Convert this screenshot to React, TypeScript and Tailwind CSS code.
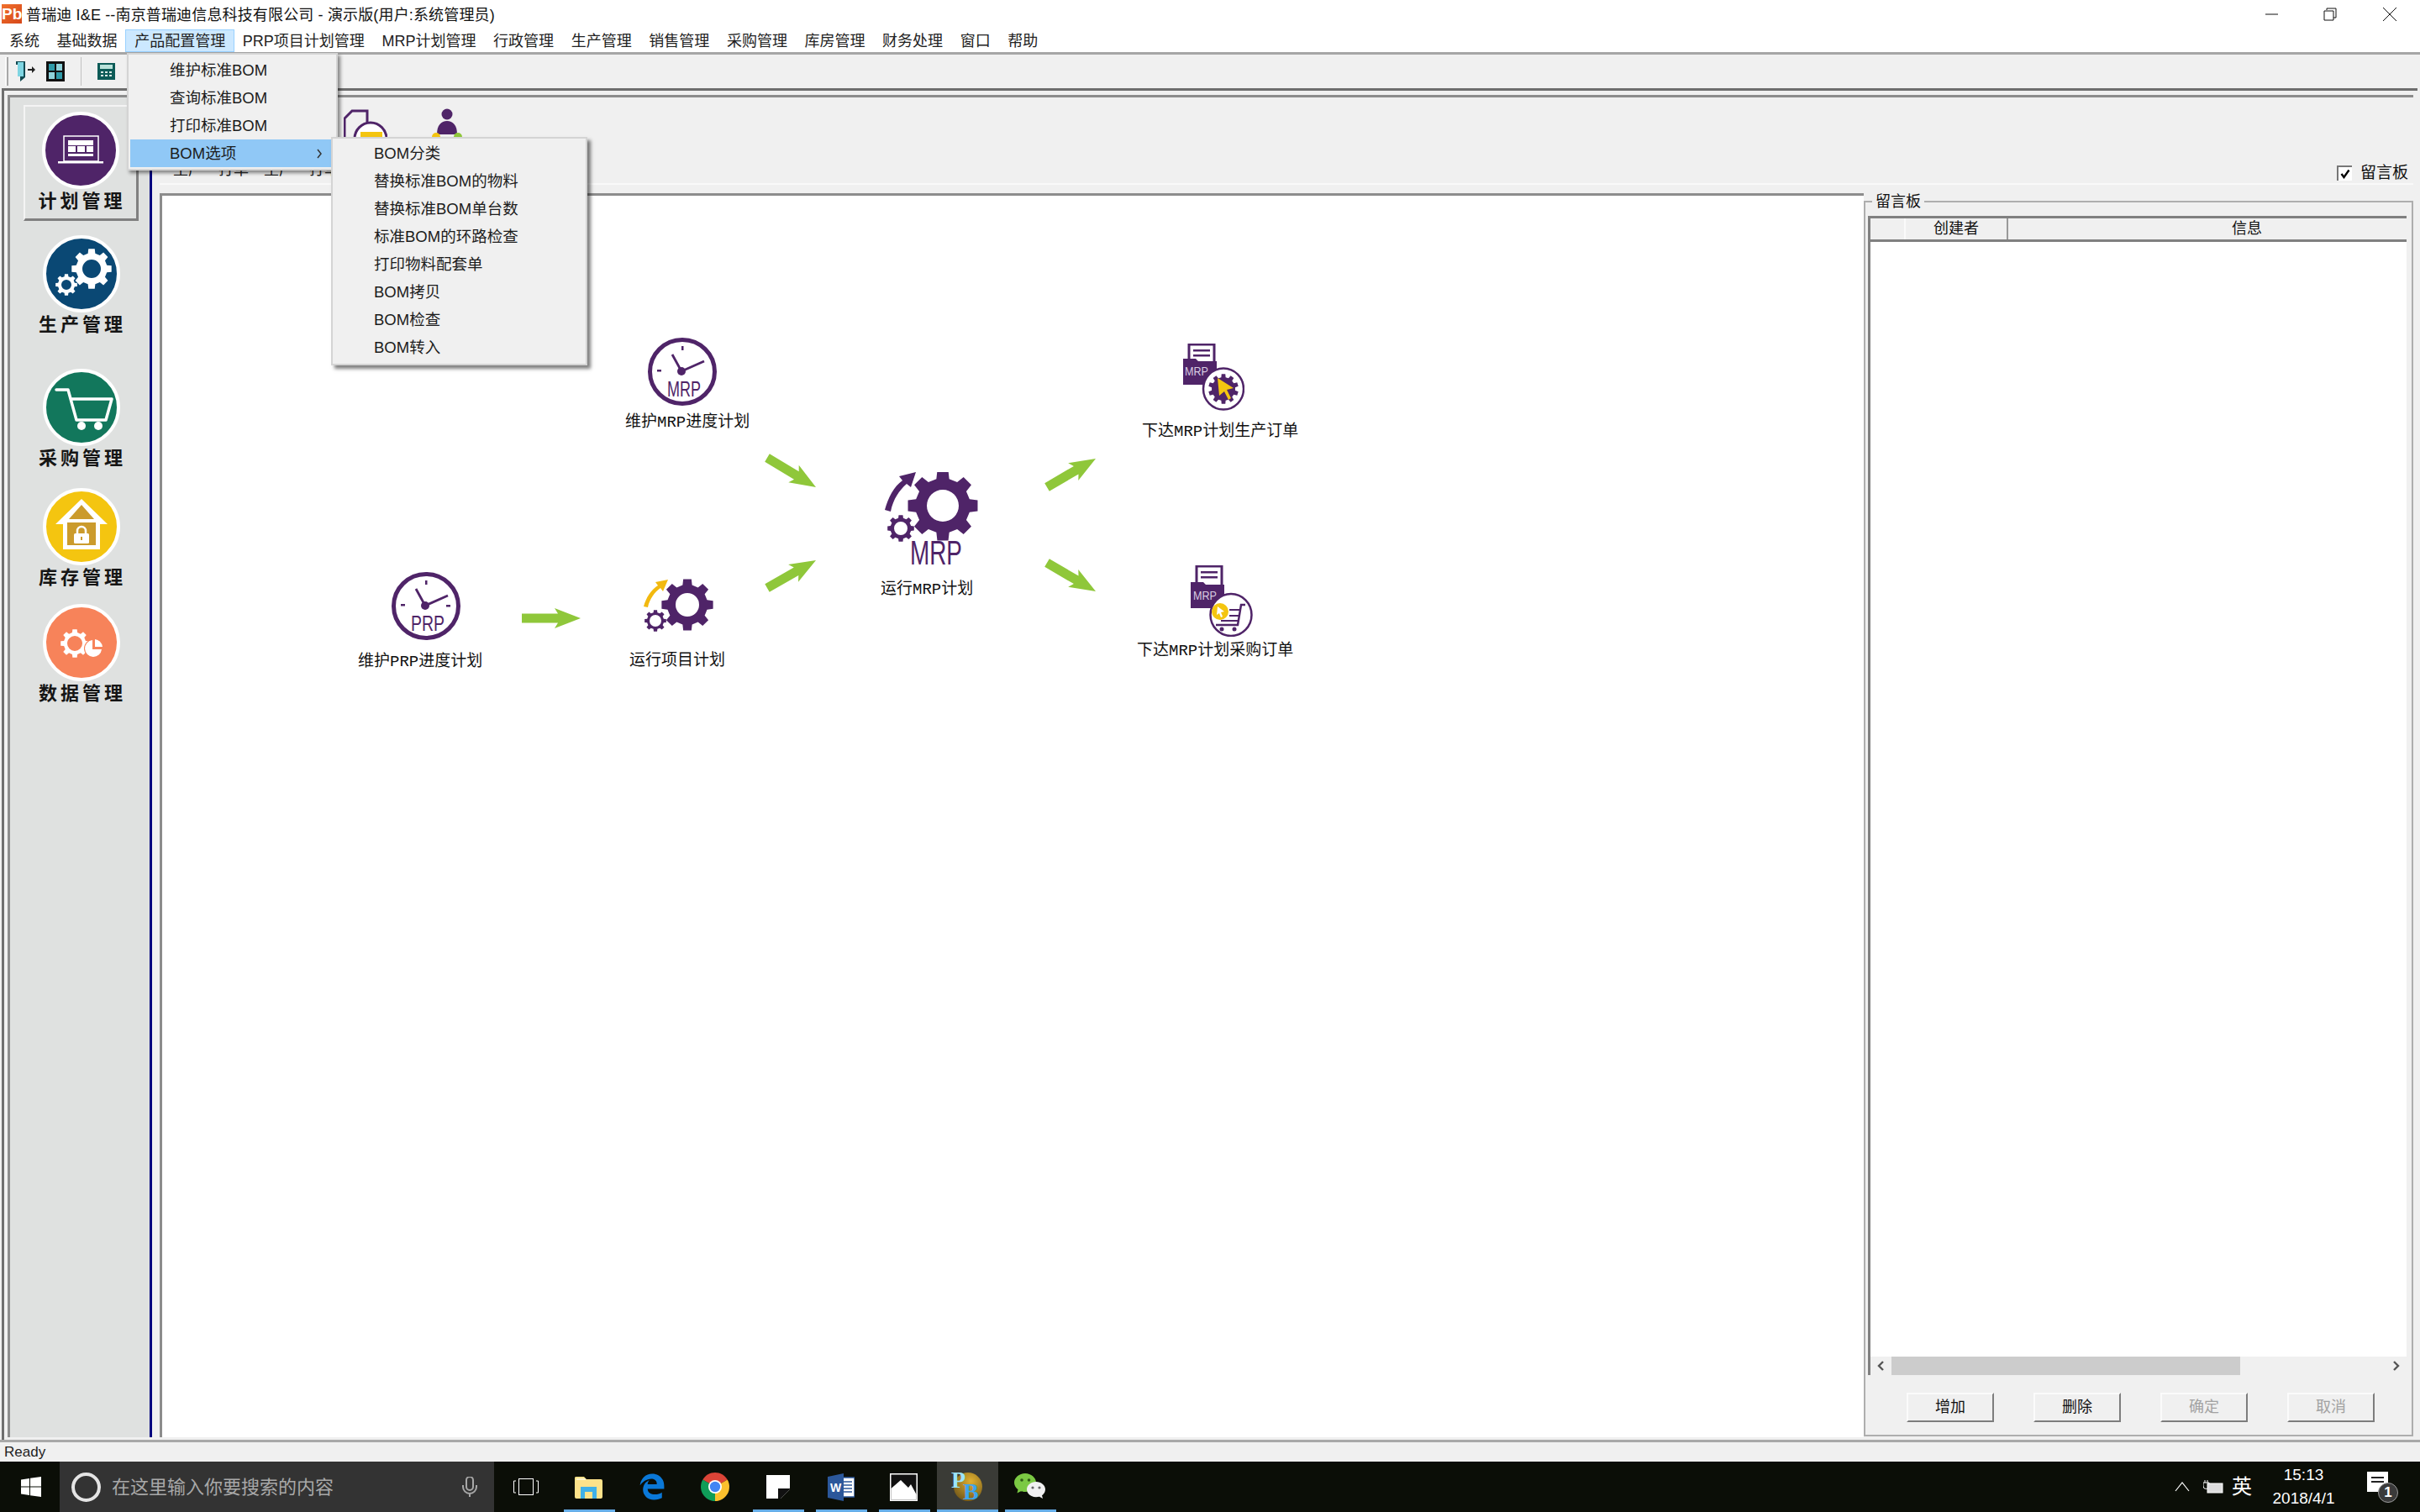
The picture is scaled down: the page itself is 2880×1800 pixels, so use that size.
import React from 'react';
import { FaEdgeLegacy } from 'react-icons/fa6';

const PURPLE = '#4f2468';
const YAHEI = 'font-["Liberation_Sans","Noto_Sans_CJK_SC",sans-serif]';

// toothed outline plus a round hole, fill with evenodd
function gearPath(cx: number, cy: number, R: number, hole: number, n = 8) {
  const root = R * 0.78;
  const step = (Math.PI * 2) / n;
  const pts: string[] = [];
  for (let i = 0; i < n; i++) {
    const a = i * step - Math.PI / 2;
    const w = step * 0.2;
    [[root, a - w * 1.5], [R, a - w], [R, a + w], [root, a + w * 1.5]].forEach(([rad, ang]) => {
      pts.push(`${(cx + rad * Math.cos(ang)).toFixed(2)} ${(cy + rad * Math.sin(ang)).toFixed(2)}`);
    });
  }
  return `M${pts.join('L')}Z M${cx - hole} ${cy}a${hole} ${hole} 0 1 0 ${hole * 2} 0a${hole} ${hole} 0 1 0 ${-hole * 2} 0Z`;
}

function CircleIcon({ color, children }: { color: string; children: React.ReactNode }) {
  return (
    <svg width="92" height="92" viewBox="-46 -46 92 92" className="shrink-0">
      <circle r="44" fill={color} stroke="#fff" strokeWidth="4" />
      {children}
    </svg>
  );
}

const sideItems = [
  {
    label: '计划管理', color: '#4f2468', cls: 'mt-[9px] pt-[6px] h-[138px] border-t-2 border-l-2 border-t-[#f4f4f4] border-l-[#f4f4f4] border-b-[3px] border-r-[3px] border-b-[#808080] border-r-[#808080]',
    icon: (
      <g>
        <rect x="-20" y="-17" width="41" height="30" fill="none" stroke="#fff" strokeWidth="1.5" />
        <rect x="-15" y="-12" width="30" height="6" fill="#fff" />
        <rect x="-15" y="-5" width="9" height="7" fill="#fff" />
        <rect x="-4" y="-5" width="9" height="7" fill="#fff" />
        <rect x="7" y="-5" width="8" height="7" fill="#fff" />
        <rect x="-15" y="4" width="30" height="3" fill="#fff" />
        <rect x="-27" y="13" width="54" height="2.5" fill="#fff" />
      </g>
    ),
  },
  {
    label: '生产管理', color: '#0a4874', cls: 'mt-[17px]',
    icon: (
      <g fill="#fff" fillRule="evenodd">
        <path d={gearPath(12, -6, 24, 11)} />
        <path d={gearPath(-18, 13, 13, 6)} />
      </g>
    ),
  },
  {
    label: '采购管理', color: '#12775c', cls: 'mt-[37px]',
    icon: (
      <g>
        <path d="M-30 -21H-16L-6 15H29L36 -10H-12" fill="none" stroke="#fff" strokeWidth="3.5" strokeLinejoin="round" strokeLinecap="round" />
        <circle cx="0" cy="22" r="5" fill="#fff" />
        <circle cx="20" cy="22" r="5" fill="#fff" />
      </g>
    ),
  },
  {
    label: '库存管理', color: '#f4c510', cls: 'mt-[20px]',
    icon: (
      <g>
        <path d="M0 -33L31 -3H22V27H-22V-3H-31Z" fill="#fff" />
        <path d="M0 -26L-15 -9H15Z" fill="#cb9b2c" />
        <rect x="-17" y="-5" width="34" height="27" fill="#cb9b2c" />
        <path d="M-5 9V5a5 5 0 0 1 10 0V9" fill="none" stroke="#fff" strokeWidth="2.5" />
        <rect x="-9" y="8" width="18" height="12" rx="1.5" fill="#fff" />
        <rect x="-1" y="12" width="2" height="4" fill="#cb9b2c" />
      </g>
    ),
  },
  {
    label: '数据管理', color: '#f7835a', cls: 'mt-[16px]',
    icon: (
      <g fill="#fff" fillRule="evenodd">
        <path d={gearPath(-8, 1, 17, 9)} />
        <circle cx="14" cy="7" r="11" fill="#f7835a" />
        <path d="M13 -3A10 10 0 1 0 24 8H13Z" />
        <path d="M16 -4A10 10 0 0 1 25 5H16Z" />
      </g>
    ),
  },
];

function Sidebar() {
  return (
    <div className="w-[169px] shrink-0 bg-[#dfe1e0] border-r-[3px] border-[#00007f] pl-[16px] flex flex-col">
      {sideItems.map(it => (
        <div key={it.label} className={`w-[137px] flex flex-col items-center ${it.cls}`}>
          <CircleIcon color={it.color}>{it.icon}</CircleIcon>
          <div className={`ml-[3px] h-[30px] leading-[30px] text-[22px] font-bold tracking-[4px] text-[#151515] whitespace-nowrap ${YAHEI}`}>{it.label}</div>
        </div>
      ))}
    </div>
  );
}

function ClockIcon({ text, rightTick }: { text: string; rightTick?: boolean }) {
  return (
    <svg width="82" height="81" viewBox="0 0 82 81" className="block">
      <ellipse cx="41" cy="40.5" rx="38.5" ry="38" fill="#fff" stroke={PURPLE} strokeWidth="5" />
      <rect x="40" y="10" width="2.5" height="5" fill={PURPLE} />
      <rect x="11" y="38" width="5" height="2.5" fill={PURPLE} />
      {rightTick && <rect x="65" y="39" width="5" height="2.5" fill={PURPLE} />}
      <path d="M29 20L40 40L67 28" fill="none" stroke={PURPLE} strokeWidth="2.8" strokeLinejoin="round" />
      <circle cx="40" cy="40" r="5" fill={PURPLE} />
      <text x="43" y="70" textAnchor="middle" fontSize="25" textLength="40" lengthAdjust="spacingAndGlyphs" fill={PURPLE} fontFamily="Liberation Sans, sans-serif">{text}</text>
    </svg>
  );
}

function RunGearIcon() {
  return (
    <svg width="85" height="63" viewBox="0 0 85 63" className="block">
      <g fill={PURPLE} fillRule="evenodd">
        <path d={gearPath(53, 31, 31, 14)} />
        <path d={gearPath(15, 50, 13, 7)} />
      </g>
      <path d="M1 33C4 22 10 13 18 8L15 4L30 1L24 15L21 11C14 16 8 24 6 34Z" fill="#f2b90f" />
    </svg>
  );
}

function MrpGearIcon() {
  return (
    <svg width="112" height="122" viewBox="0 0 112 122" className="block">
      <g fill={PURPLE} fillRule="evenodd">
        <path d={gearPath(70, 40, 42, 19)} />
        <path d={gearPath(20, 67, 16, 8)} />
      </g>
      <path d="M1 45C5 30 12 17 22 10L18 5L38 0L32 18L27 14C18 22 11 32 8 47Z" fill={PURPLE} />
      <text transform="translate(31 110) scale(0.68 1)" fontSize="41" fill={PURPLE} fontFamily="Liberation Sans, sans-serif">MRP</text>
    </svg>
  );
}

function DocFolder() {
  return (
    <g>
      <rect x="7" y="1" width="30" height="28" fill="#fff" stroke={PURPLE} strokeWidth="3" />
      <rect x="12" y="7" width="20" height="2.5" fill={PURPLE} />
      <rect x="12" y="13" width="20" height="2.5" fill={PURPLE} />
      <path d="M0 18H15L18 21H40V49H0Z" fill={PURPLE} />
      <text x="2" y="38" fontSize="15" textLength="28" lengthAdjust="spacingAndGlyphs" fill="#d8cbe0" fontFamily="Liberation Sans, sans-serif">MRP</text>
    </g>
  );
}

function OrderMakeIcon() {
  return (
    <svg width="73" height="80" viewBox="0 0 73 80" className="block">
      <DocFolder />
      <ellipse cx="48" cy="54" rx="24" ry="24.5" fill="#fff" stroke={PURPLE} strokeWidth="2.5" />
      <path d={gearPath(48, 54, 18, 1, 10)} fill={PURPLE} />
      <path d="M41 41L60 53L52 55L57 65L54 67L49 57L43 62Z" fill="#f4c510" />
    </svg>
  );
}

function OrderBuyIcon() {
  return (
    <svg width="74" height="85" viewBox="0 0 74 85" className="block">
      <g>
        <rect x="7" y="1" width="30" height="28" fill="#fff" stroke={PURPLE} strokeWidth="3" />
        <rect x="12" y="7" width="20" height="2.5" fill={PURPLE} />
        <rect x="12" y="13" width="20" height="2.5" fill={PURPLE} />
        <path d="M0 20H15L18 23H40V51H0Z" fill={PURPLE} />
        <text x="3" y="41" fontSize="15" textLength="28" lengthAdjust="spacingAndGlyphs" fill="#d8cbe0" fontFamily="Liberation Sans, sans-serif">MRP</text>
      </g>
      <ellipse cx="48" cy="59" rx="24.5" ry="25" fill="#fff" stroke={PURPLE} strokeWidth="2.5" />
      <path d="M30 71H56L60 47H65" fill="none" stroke={PURPLE} strokeWidth="2.5" />
      <path d="M46 53H59M46 60H58M36 66H56" stroke={PURPLE} strokeWidth="1.8" />
      <circle cx="37" cy="76" r="2.5" fill={PURPLE} />
      <circle cx="52" cy="76" r="2.5" fill={PURPLE} />
      <circle cx="35" cy="55" r="10" fill="#f4c510" />
      <path d="M32 49L40 55L36 56L38 61L36 62L34 57L31 59Z" fill="#fff" />
    </svg>
  );
}

// tail and tip in canvas coordinates
function arrowPoints(x1: number, y1: number, x2: number, y2: number) {
  const len = Math.hypot(x2 - x1, y2 - y1);
  const ux = (x2 - x1) / len;
  const uy = (y2 - y1) / len;
  const nx = -uy;
  const ny = ux;
  const bx = x2 - ux * 31;
  const by = y2 - uy * 31;
  const p = (x: number, y: number, o: number) => `${(x + nx * o).toFixed(1)},${(y + ny * o).toFixed(1)}`;
  return [p(x1, y1, 5.5), p(bx + ux * 4, by + uy * 4, 5.5), p(bx, by, 12), p(x2, y2, 0), p(bx, by, -12), p(bx + ux * 4, by + uy * 4, -5.5), p(x1, y1, -5.5)].join(' ');
}

const arrows = [
  [428, 503, 498, 503],
  [720, 312, 778, 347],
  [720, 467, 778, 434],
  [1053, 347, 1111, 313],
  [1053, 437, 1111, 471],
];

const nodeLabel = 'text-[19px] leading-[26px] whitespace-nowrap text-[#111] font-["Liberation_Mono","Noto_Sans_CJK_SC",monospace]';

function Canvas() {
  return (
    <div className="relative flex-1 min-w-0 bg-white border-t-[3px] border-l-[3px] border-[#8c8c8c] overflow-hidden">
      <svg className="absolute inset-0" width="2030" height="1480">
        {arrows.map((a, i) => (
          <polygon key={i} points={arrowPoints(a[0], a[1], a[2], a[3])} fill="#8fc73a" />
        ))}
      </svg>
      <div className="absolute left-[233px] top-[448px]">
        <div className="ml-[40px]"><ClockIcon text="PRP" rightTick /></div>
        <div className={`mt-[13px] ${nodeLabel}`}>维护PRP进度计划</div>
      </div>
      <div className="absolute left-[551px] top-[169px]">
        <div className="ml-[27px]"><ClockIcon text="MRP" /></div>
        <div className={`mt-[7px] ${nodeLabel}`}>维护MRP进度计划</div>
      </div>
      <div className="absolute left-[556px] top-[456px]">
        <div className="ml-[16px]"><RunGearIcon /></div>
        <div className={`mt-[22px] ${nodeLabel}`}>运行项目计划</div>
      </div>
      <div className="absolute left-[855px] top-[329px]">
        <div className="ml-[4px]"><MrpGearIcon /></div>
        <div className={`mt-[5px] ${nodeLabel}`}>运行MRP计划</div>
      </div>
      <div className="absolute left-[1166px] top-[176px]">
        <div className="ml-[49px]"><OrderMakeIcon /></div>
        <div className={`mt-[12px] ${nodeLabel}`}>下达MRP计划生产订单</div>
      </div>
      <div className="absolute left-[1160px] top-[440px]">
        <div className="ml-[64px]"><OrderBuyIcon /></div>
        <div className={`mt-[4px] ${nodeLabel}`}>下达MRP计划采购订单</div>
      </div>
    </div>
  );
}

function NoteBoard() {
  const btns = [
    { t: '增加', on: true }, { t: '删除', on: true }, { t: '确定', on: false }, { t: '取消', on: false },
  ];
  return (
    <div className="relative w-[654px] shrink-0 mt-[9px] mb-px border-2 border-[#aeaeae] pt-[16px] pl-[3px] pr-[6px] flex flex-col">
      <div className="absolute left-[8px] top-[-13px] px-[4px] bg-[#f0f0f0] text-[18px] leading-[24px]">留言板</div>
      <div className="flex-1 min-h-0 flex flex-col border-t-[3px] border-l-[3px] border-[#808080]">
        <div className="h-[28px] shrink-0 flex border-b-[3px] border-[#808080] text-[18px] leading-[25px]">
          <div className="w-[42px] border-r-2 border-[#fafafa]" />
          <div className="w-[122px] text-center border-r-2 border-[#9a9a9a]">创建者</div>
          <div className="flex-1 text-center pl-[94px]">信息</div>
        </div>
        <div className="flex-1 bg-white" />
        <div className="h-[22px] shrink-0 flex items-center bg-[#f0f0f0] text-[#555]">
          <div className="w-[25px] flex justify-center">
            <svg width="9" height="14" viewBox="0 0 9 14"><path d="M7 2L2 7L7 12" fill="none" stroke="#555" strokeWidth="2.4" /></svg>
          </div>
          <div className="w-[415px] h-full bg-[#cccccc]" />
          <div className="flex-1" />
          <div className="w-[25px] flex justify-center">
            <svg width="9" height="14" viewBox="0 0 9 14"><path d="M2 2L7 7L2 12" fill="none" stroke="#555" strokeWidth="2.4" /></svg>
          </div>
        </div>
      </div>
      <div className="mt-[21px] mb-[15px] pl-[46px] flex gap-[47px]">
        {btns.map(b => (
          <div key={b.t} className={`w-[104px] h-[35px] flex items-center justify-center text-[18px] border-t-2 border-l-2 border-[#fbfbfb] border-b-2 border-r-2 border-b-[#7d7d7d] border-r-[#7d7d7d] ${b.on ? 'text-[#111]' : 'text-[#a2a2a2]'}`}>{b.t}</div>
        ))}
      </div>
    </div>
  );
}

function TopPanel() {
  return (
    <div className="relative h-[104px] shrink-0 border-b-2 border-[#f9f9f9]">
      <div className="pl-[219px] pt-[13px] flex gap-[53px]">
        <svg width="52" height="50" viewBox="0 0 52 50">
          <path d="M1 36V12L10 3H28V22" fill="none" stroke={PURPLE} strokeWidth="3" />
          <circle cx="32" cy="36" r="19" fill="#fff" stroke={PURPLE} strokeWidth="3" />
          <path d="M20 28H46V36H20Z" fill="#f4c510" />
        </svg>
        <svg width="36" height="50" viewBox="0 0 36 50">
          <circle cx="18" cy="7" r="6.5" fill={PURPLE} />
          <path d="M6 31C6 20 11 15 18 15C25 15 30 20 30 31Z" fill={PURPLE} />
          <circle cx="5" cy="34" r="5" fill="#f4c510" />
          <circle cx="31" cy="34" r="5" fill="#8fc73a" />
        </svg>
      </div>
      <div className="absolute left-[16px] top-[74px] text-[18px] leading-[24px] whitespace-nowrap text-[#222] flex gap-[18px]">
        <span>生产</span><span>打单</span><span>生产</span><span>打单</span>
      </div>
      <div className="absolute right-[6px] bottom-0 flex items-center gap-[10px]">
        <div className="w-[18px] h-[18px] bg-white border-t-2 border-l-2 border-[#777] flex items-center justify-center">
          <svg width="12" height="12" viewBox="0 0 12 12"><path d="M1.5 6L4.5 10L10.5 1.5" fill="none" stroke="#000" strokeWidth="2.4" /></svg>
        </div>
        <span className="text-[19px] leading-[24px] text-[#111]">留言板</span>
      </div>
    </div>
  );
}

const menus = ['系统', '基础数据', '产品配置管理', 'PRP项目计划管理', 'MRP计划管理', '行政管理', '生产管理', '销售管理', '采购管理', '库房管理', '财务处理', '窗口', '帮助'];
const dropItems = ['维护标准BOM', '查询标准BOM', '打印标准BOM', 'BOM选项'];
const subItems = ['BOM分类', '替换标准BOM的物料', '替换标准BOM单台数', '标准BOM的环路检查', '打印物料配套单', 'BOM拷贝', 'BOM检查', 'BOM转入'];

function Menus() {
  return (
    <>
      <div className="absolute left-[151px] top-[63px] w-[251px] h-[140px] z-20 bg-[#f0f0f0] border-2 border-[#d4d4d4] shadow-[3px_3px_4px_rgba(0,0,0,0.45)] pl-[2px] pr-[6px] pt-[2px]">
        {dropItems.map((t, i) => (
          <div key={t} className={`relative h-[33px] leading-[33px] pl-[47px] text-[18.5px] text-[#1c1c1c] ${i === 3 ? 'bg-[#90c8f6]' : ''}`}>
            {t}
            {i === 3 && (
              <svg className="absolute right-[10px] top-[10px]" width="8" height="14" viewBox="0 0 8 14"><path d="M2 2L6 7L2 12" fill="none" stroke="#333" strokeWidth="1.5" /></svg>
            )}
          </div>
        ))}
      </div>
      <div className="absolute left-[394px] top-[163px] w-[305px] h-[272px] z-30 bg-[#f0f0f0] border-2 border-[#d4d4d4] shadow-[4px_4px_4px_rgba(0,0,0,0.5)] pt-[1px] pl-[49px]">
        {subItems.map(t => (
          <div key={t} className="h-[33px] leading-[33px] text-[18.5px] text-[#1c1c1c] whitespace-nowrap">{t}</div>
        ))}
      </div>
    </>
  );
}

function WindowButtons() {
  return (
    <div className="ml-auto flex items-center">
      <svg width="16" height="16" viewBox="0 0 16 16" className="mr-[53px]"><path d="M0 8H15" stroke="#111" strokeWidth="1" /></svg>
      <svg width="16" height="16" viewBox="0 0 16 16" className="mr-[54px]"><path d="M4 3V1H15V12H12M1 4H12V15H1Z" fill="none" stroke="#111" strokeWidth="1" /></svg>
      <svg width="18" height="18" viewBox="0 0 18 18" className="mr-[27px]"><path d="M1 1L17 17M17 1L1 17" stroke="#111" strokeWidth="1" /></svg>
    </div>
  );
}

function Toolbar() {
  return (
    <div className="h-[43px] shrink-0 flex items-center border-t-[3px] border-[#a6a6a6] bg-[#f0f0f0] pl-[6px]">
      <div className="w-[4px] h-[34px] border-l-2 border-r-2 border-l-[#fafafa] border-r-[#a8a8a8]" />
      <svg width="24" height="24" viewBox="0 0 24 24" className="ml-[8px]">
        <path d="M1 0H12V19L6 24V4H1Z" fill="#124a52" />
        <rect x="3" y="1" width="7" height="17" fill="#7fd5e2" />
        <path d="M15 9H20V6L24 10L20 14V11H15Z" fill="#222" />
      </svg>
      <svg width="24" height="24" viewBox="0 0 24 24" className="ml-[12px]">
        <rect x="1" y="0" width="22" height="24" fill="#111" />
        <rect x="4" y="3" width="7" height="8" fill="#2f9aa8" />
        <rect x="13" y="3" width="7" height="8" fill="#8fd2da" />
        <rect x="4" y="13" width="7" height="8" fill="#8fd2da" />
        <rect x="13" y="13" width="7" height="8" fill="#2f9aa8" />
      </svg>
      <div className="w-px h-[34px] bg-[#c2c2c2] ml-[18px]" />
      <svg width="21" height="20" viewBox="0 0 21 20" className="ml-[19px]">
        <rect width="21" height="20" fill="#0d5b57" />
        <rect x="3" y="2" width="15" height="5" fill="#b9e2da" />
        <path d="M4 10h3v2H4zM9 10h3v2H9zM14 10h3v2h-3zM4 14h3v2H4zM9 14h3v2H9zM14 14h3v2h-3z" fill="#d8e8e4" />
      </svg>
    </div>
  );
}

function ChromeIcon() {
  return (
    <svg width="34" height="34" viewBox="0 0 34 34">
      <path d="M17 17L2.3 8.5A17 17 0 0 1 31.7 8.5Z" fill="#db4437" />
      <path d="M17 17L31.7 8.5A17 17 0 0 1 17 34Z" fill="#fbc02d" />
      <path d="M17 17L17 34A17 17 0 0 1 2.3 8.5Z" fill="#0f9d58" />
      <circle cx="17" cy="17" r="8" fill="#fff" />
      <circle cx="17" cy="17" r="6.2" fill="#4285f4" />
    </svg>
  );
}

const taskIcons: { key: string; node: React.ReactNode; active?: boolean; bar: boolean }[] = [
  {
    key: 'folder', bar: true,
    node: (
      <svg width="33" height="27" viewBox="0 0 33 27">
        <path d="M0 2a2 2 0 0 1 2-1H11L14 4H31a2 2 0 0 1 2 2V25a2 2 0 0 1-2 2H2a2 2 0 0 1-2-2Z" fill="#fde28a" />
        <rect x="2" y="3" width="11" height="2" fill="#fff6cc" />
        <path d="M7 13H26V27H21V19H12V27H7Z" fill="#3fb0e8" />
      </svg>
    ),
  },
  { key: 'edge', bar: false, node: <FaEdgeLegacy size={32} color="#0a78d8" /> },
  { key: 'chrome', bar: false, node: <ChromeIcon /> },
  {
    key: 'sticky', bar: true,
    node: (
      <svg width="28" height="28" viewBox="0 0 28 28">
        <path d="M0 0H28V17L17 28H0Z" fill="#fff" />
        <path d="M14 16H28V17L17 28H14Z" fill="#111" />
      </svg>
    ),
  },
  {
    key: 'word', bar: true,
    node: (
      <svg width="32" height="33" viewBox="0 0 32 33">
        <rect x="12" y="5" width="20" height="23" fill="#fff" stroke="#2b579a" strokeWidth="1.5" />
        <path d="M17 10H29M17 14H29M17 18H29M17 22H29" stroke="#2b579a" strokeWidth="1.5" />
        <path d="M0 4L19 0V33L0 29Z" fill="#2b579a" />
        <text x="9.5" y="22" textAnchor="middle" fontSize="14" fontWeight="700" fill="#fff" fontFamily="Liberation Sans, sans-serif">W</text>
      </svg>
    ),
  },
  {
    key: 'photo', bar: true,
    node: (
      <svg width="33" height="33" viewBox="0 0 33 33">
        <rect width="33" height="33" fill="#fff" />
        <rect x="1.5" y="1.5" width="30" height="30" fill="#111" />
        <path d="M1.5 31.5V18L13 8L22 17L25 13L31.5 25V31.5Z" fill="#fff" />
      </svg>
    ),
  },
  {
    key: 'pb', bar: true, active: true,
    node: (
      <div className="relative w-[37px] h-[37px]">
        <div className="absolute right-0 top-[1px] w-[34px] h-[34px] rounded-full bg-[radial-gradient(circle_at_60%_30%,#e0b030,#5a4414)]" />
        <span className="absolute left-0 top-[-6px] text-[28px] leading-[32px] font-bold text-[#9be3fb] font-['Liberation_Serif',serif]">P</span>
        <span className="absolute left-[14px] top-[8px] text-[28px] leading-[32px] font-bold text-[#3da5ec] font-['Liberation_Serif',serif]">B</span>
      </div>
    ),
  },
  {
    key: 'wechat', bar: true,
    node: (
      <svg width="37" height="32" viewBox="0 0 37 32">
        <path d="M13 0C20 0 26 5 26 11C26 17 20 22 13 22C11 22 9.5 21.8 8 21.2L3.5 23.5L4.5 19.2C1.7 17 0 14.2 0 11C0 5 6 0 13 0Z" fill="#7bc943" />
        <circle cx="9" cy="8" r="1.8" fill="#2f5d16" />
        <circle cx="17.5" cy="8" r="1.8" fill="#2f5d16" />
        <path d="M26 10C32 10 37 14 37 19C37 22 35.5 24.5 33 26.2L34 30L30 27.8C28.8 28.1 27.4 28.3 26 28.3C20 28.3 15 24.2 15 19C15 14 20 10 26 10Z" fill="#f1f1f1" />
        <circle cx="22" cy="17" r="1.6" fill="#666" />
        <circle cx="30" cy="17" r="1.6" fill="#666" />
      </svg>
    ),
  },
];

function Taskbar() {
  return (
    <div className="h-[60px] shrink-0 flex bg-[#0b0e07] text-white">
      <div className="w-[71px] flex items-center justify-center">
        <svg width="24" height="24" viewBox="0 0 24 24" className="ml-[2px]">
          <path d="M0 3.4L10 2V11.4H0ZM11 1.8L24 0V11.4H11ZM0 12.5H10V22L0 20.6ZM11 12.5H24V24L11 22.2Z" fill="#fff" />
        </svg>
      </div>
      <div className="w-[517px] bg-[#333333] flex items-center pl-[14px]">
        <div className="w-[35px] h-[35px] rounded-full border-[4px] border-[#e4e4e4]" />
        <span className={`ml-[13px] text-[22px] text-[#a8a8a8] ${YAHEI}`}>在这里输入你要搜索的内容</span>
        <svg width="18" height="24" viewBox="0 0 18 24" className="ml-[153px]">
          <rect x="5" y="0" width="8" height="16" rx="4" fill="none" stroke="#a8a8a8" strokeWidth="2" />
          <path d="M1 10V12A8 8 0 0 0 17 12V10M9 20V24" fill="none" stroke="#a8a8a8" strokeWidth="2" />
        </svg>
      </div>
      <div className="w-[75px] flex items-center justify-center">
        <svg width="30" height="20" viewBox="0 0 30 20">
          <rect x="6.5" y="0.5" width="17" height="19" fill="none" stroke="#fff" />
          <path d="M3 3H0.5V17H3M27 3H29.5V17H27" fill="none" stroke="#fff" />
        </svg>
      </div>
      {taskIcons.map(t => (
        <div key={t.key} className="relative w-[75px] h-full flex items-center justify-center">
          {t.active && <div className="absolute inset-y-0 left-[2px] right-0 bg-[#3a3b36]" />}
          <div className="relative">{t.node}</div>
          {t.bar && <div className={`absolute bottom-0 h-[3px] bg-[#66aee8] ${t.active ? 'left-[2px] right-0' : 'left-[8px] w-[61px]'}`} />}
        </div>
      ))}
      <div className="ml-auto flex items-center">
        <svg width="18" height="12" viewBox="0 0 18 12"><path d="M1 11L9 1L17 11" fill="none" stroke="#fff" strokeWidth="1.2" /></svg>
        <svg width="24" height="16" viewBox="0 0 24 16" className="ml-[16px]">
          <path d="M2 0V3M5 0V3M0 3H7V7A3.5 3.5 0 0 1 0 7Z" fill="none" stroke="#fff" />
          <rect x="5" y="4" width="18" height="11" fill="#ddd" stroke="#fff" />
        </svg>
        <span className={`ml-[10px] text-[24px] ${YAHEI}`}>英</span>
        <div className="ml-[21px] w-[81px] flex flex-col items-center text-[19px] leading-[28px] font-['Liberation_Sans',sans-serif]">
          <span>15:13</span>
          <span>2018/4/1</span>
        </div>
        <div className="relative ml-[35px] mr-[26px] w-[37px] h-[37px]">
          <div className="absolute left-0 top-0 w-[25px] h-[24px] bg-white" />
          <div className="absolute left-[5px] top-[6px] w-[15px] h-[2px] bg-[#222]" />
          <div className="absolute left-[5px] top-[11px] w-[15px] h-[2px] bg-[#222]" />
          <div className="absolute right-0 bottom-0 w-[24px] h-[24px] rounded-full bg-[#3a3a3a] border border-[#999] flex items-center justify-center text-[17px] font-bold">1</div>
        </div>
      </div>
    </div>
  );
}

export default function App() {
  return (
    <div className={`relative w-[2880px] h-[1800px] overflow-hidden flex flex-col bg-[#f0f0f0] text-[#111] ${YAHEI}`}>
      {/* title bar */}
      <div className="h-[33px] shrink-0 flex items-center bg-white">
        <div className="w-[24px] h-[23px] ml-[2px] bg-[linear-gradient(135deg,#f0702c,#d6481a)] text-white text-[19px] leading-[23px] text-center font-bold">Pb</div>
        <span className="ml-[5px] mt-[3px] text-[18px] tracking-[0.15px] whitespace-nowrap">普瑞迪 I&amp;E --南京普瑞迪信息科技有限公司 - 演示版(用户:系统管理员)</span>
        <WindowButtons />
      </div>
      {/* menu bar */}
      <div className="h-[29px] shrink-0 flex items-start bg-white pt-[2px] text-[18px] text-[#222]">
        {menus.map((m, i) => (
          <div key={m} className={`h-[27px] leading-[27px] px-[10px] whitespace-nowrap border mr-[-1.4px] ${i === 2 ? 'bg-[#cce8ff] border-[#99d1ff]' : 'border-transparent'}`}>{m}</div>
        ))}
      </div>
      <Toolbar />
      {/* main area */}
      <div className="flex-1 min-h-0 ml-[2px] mr-[3px] border-t-[3px] border-l-[3px] border-[#6e6e6e] pt-[5px] pl-[4px] pr-[5px] pb-[3px] flex">
        <div className="flex-1 min-w-0 flex border-t-[3px] border-l-[3px] border-[#8c8c8c]">
          <Sidebar />
          <div className="flex-1 min-w-0 pl-[9px] flex flex-col">
            <TopPanel />
            <div className="flex-1 min-h-0 mt-[10px] flex">
              <Canvas />
              <NoteBoard />
            </div>
          </div>
        </div>
      </div>
      {/* status bar */}
      <div className="h-[26px] shrink-0 border-t-[3px] border-[#a8a8a8] pl-[5px] text-[17px] leading-[23px] text-[#222]">Ready</div>
      <Taskbar />
      <Menus />
    </div>
  );
}
